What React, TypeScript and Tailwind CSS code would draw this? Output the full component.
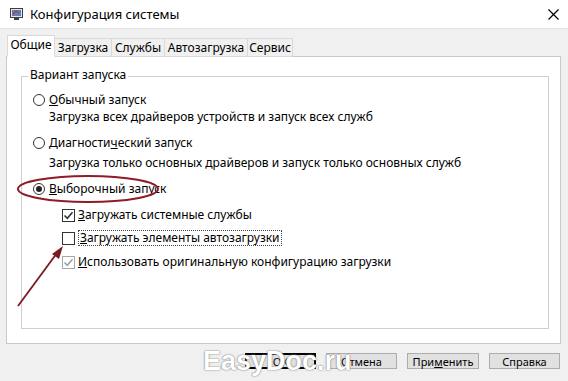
import React from "react";

const font = { fontFamily: '"Noto Sans", "Open Sans", sans-serif' };

function Radio({ checked }: { checked?: boolean }) {
  return (
    <span className="w-[12px] h-[12px] rounded-full border border-[#333] bg-white flex items-center justify-center shrink-0">
      {checked && <span className="w-[6px] h-[6px] rounded-full bg-[#222]" />}
    </span>
  );
}

function Check({ checked, disabled }: { checked?: boolean; disabled?: boolean }) {
  const c = disabled ? "#a0a0a0" : "#333";
  return (
    <span
      className={
        "w-[13px] h-[13px] border bg-white flex items-center justify-center shrink-0 " +
        (disabled ? "border-[#a8a8a8]" : "border-[#333]")
      }
    >
      {checked && (
        <svg width="11" height="11" viewBox="0 0 11 11">
          <path d="M1.5 5.5 L4.3 8.3 L9.5 2.2" fill="none" stroke={c} strokeWidth="1.6" />
        </svg>
      )}
    </span>
  );
}

export default function App() {
  return (
    <div
      className="w-[568px] h-[381px] bg-[#f0f0f0] relative overflow-hidden text-[12px] text-black leading-none"
      style={font}
    >
      {/* Title bar */}
      <div className="h-[29px] bg-white border-b border-[#e3e3e3] flex items-center pl-[10px] pr-[9px]">
        <svg width="13" height="13" viewBox="0 0 13 13" className="shrink-0">
          <rect x="0.5" y="0.5" width="12" height="9" fill="#dfe6ee" stroke="#3a3f48" />
          <rect x="2" y="2" width="9" height="6" fill="#5b7fb8" />
          <path d="M3 6 L6 3 L9 5" stroke="#c0392b" strokeWidth="1.2" fill="none" />
          <rect x="4" y="10" width="5" height="2" fill="#3a3f48" />
        </svg>
        <span className="ml-[7px] text-[13px]">Конфигурация системы</span>
        <svg width="11" height="11" viewBox="0 0 11 11" className="ml-auto">
          <path d="M0.5 0.5 L10.5 10.5 M10.5 0.5 L0.5 10.5" stroke="#000" strokeWidth="1.2" />
        </svg>
      </div>

      {/* Tabs */}
      <div className="pl-[7px] flex items-end h-[28px] -mb-px relative z-10">
        <div className="h-[22px] w-[48px] bg-white border border-[#d9d9d9] border-b-white flex items-center justify-center pb-[2px]">
          Общие
        </div>
        <div className="h-[19px] w-[57px] bg-[#f0f0f0] border border-l-0 border-[#d9d9d9] flex items-center justify-center">
          Загрузка
        </div>
        <div className="h-[19px] w-[53px] bg-[#f0f0f0] border border-l-0 border-[#d9d9d9] flex items-center justify-center">
          Службы
        </div>
        <div className="h-[19px] w-[83px] bg-[#f0f0f0] border border-l-0 border-[#d9d9d9] flex items-center justify-center">
          Автозагрузка
        </div>
        <div className="h-[19px] w-[45px] bg-[#f0f0f0] border border-l-0 border-[#d9d9d9] flex items-center justify-center">
          Сервис
        </div>
      </div>

      {/* Panel */}
      <div className="ml-[6px] w-[555px] h-[288px] bg-white border border-[#c8c8c8] pt-[19px] pl-[14px]">
        <div className="relative w-[528px] h-[253px] border border-[#cfcfcf] pl-[11px]">
          <span className="absolute -top-[8px] left-[6px] bg-white px-[2px]">Вариант запуска</span>

          <div className="h-[16px] mt-[15px] flex items-center gap-[4px]">
            <Radio />
            <span>
              <u>О</u>бычный запуск
            </span>
          </div>
          <div className="h-[16px] mt-[1px] flex items-center pl-[16px]">
            Загрузка всех драйверов устройств и запуск всех служб
          </div>

          <div className="h-[16px] mt-[10px] flex items-center gap-[4px]">
            <Radio />
            <span>
              Диагности<u>ч</u>еский запуск
            </span>
          </div>
          <div className="h-[16px] mt-[4px] flex items-center pl-[16px]">
            Загрузка только основных драйверов и запуск только основных служб
          </div>

          <div className="h-[16px] mt-[10px] flex items-center gap-[4px]">
            <Radio checked />
            <span>
              <u>В</u>ыборочный запуск
            </span>
          </div>

          <div className="h-[16px] mt-[10px] flex items-center gap-[3px] pl-[29px]">
            <Check checked />
            <span>
              <u>З</u>агружать системные службы
            </span>
          </div>
          <div className="h-[16px] mt-[7px] flex items-center gap-[3px] pl-[29px]">
            <Check />
            <span className="border border-dotted border-[#444] px-px py-[1px]">
              <u>З</u>агружать элементы автозагрузки
            </span>
          </div>
          <div className="h-[16px] mt-[8px] flex items-center gap-[3px] pl-[29px]">
            <Check checked disabled />
            <span>
              <u>И</u>спользовать оригинальную конфигурацию загрузки
            </span>
          </div>
        </div>
      </div>

      {/* Buttons */}
      <div className="flex justify-end gap-[10px] pr-[8px] mt-[9px] text-[11px]">
        <button className="w-[71px] h-[16px] border-2 border-black bg-[#e1e1e1] flex items-center justify-center">
          OK
        </button>
        <button className="w-[71px] h-[16px] border border-[#adadad] bg-[#e1e1e1] flex items-center justify-center">
          Отмена
        </button>
        <button className="w-[72px] h-[16px] border border-[#adadad] bg-[#e1e1e1] flex items-center justify-center">
          <span>
            При<u>м</u>енить
          </span>
        </button>
        <button className="w-[71px] h-[16px] border border-[#adadad] bg-[#e1e1e1] flex items-center justify-center">
          Справка
        </button>
      </div>

      {/* Red annotations */}
      <svg className="absolute left-0 top-0 pointer-events-none" width="568" height="381">
        <ellipse cx="88" cy="189" rx="70" ry="13" fill="none" stroke="#8e1c26" strokeWidth="2" />
        <line x1="18" y1="306" x2="57" y2="253" stroke="#7a1a22" strokeWidth="1.8" />
        <polygon points="63,246 52,254 59,259" fill="#7a1a22" />
      </svg>

      {/* Watermark */}
      <div
        className="absolute left-[203px] top-[348px] text-[27px] font-bold text-white leading-none"
        style={{ fontFamily: '"Liberation Sans", Arial, sans-serif', textShadow: "0 0 1px #666, 0 0 2px #999" }}
      >
        EasyDoc.ru
      </div>
    </div>
  );
}
